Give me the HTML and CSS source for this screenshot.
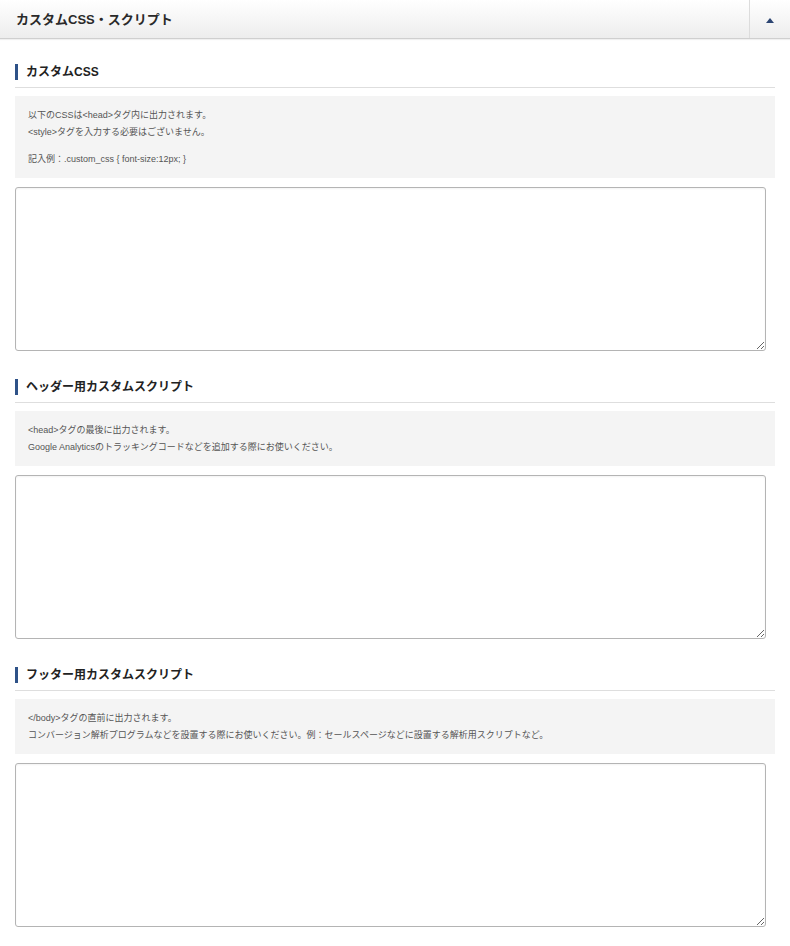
FILE: index.html
```html
<!DOCTYPE html>
<html lang="ja">
<head>
<meta charset="utf-8">
<title>カスタムCSS・スクリプト</title>
<link rel="stylesheet" href="styles.css">
</head>
<body>
<div class="panel">
  <div class="panel-head">
    <h2 class="panel-title">カスタムCSS・スクリプト</h2>
    <button class="panel-toggle" type="button" aria-label="閉じる">
      <svg width="8" height="5" viewBox="0 0 8 5"><path d="M0 5 L4 0 L8 5 Z" fill="#2c4572"/></svg>
    </button>
  </div>
  <div class="panel-body">
    <section class="field">
      <h3 class="field-title">カスタムCSS</h3>
      <div class="field-note">
        <p>以下のCSSは&lt;head&gt;タグ内に出力されます。<br>&lt;style&gt;タグを入力する必要はございません。</p>
        <p>記入例：.custom_css { font-size:12px; }</p>
      </div>
      <textarea class="field-input"></textarea>
    </section>
    <section class="field">
      <h3 class="field-title">ヘッダー用カスタムスクリプト</h3>
      <div class="field-note">
        <p>&lt;head&gt;タグの最後に出力されます。<br>Google Analyticsのトラッキングコードなどを追加する際にお使いください。</p>
      </div>
      <textarea class="field-input"></textarea>
    </section>
    <section class="field">
      <h3 class="field-title">フッター用カスタムスクリプト</h3>
      <div class="field-note">
        <p>&lt;/body&gt;タグの直前に出力されます。<br>コンバージョン解析プログラムなどを設置する際にお使いください。例：セールスページなどに設置する解析用スクリプトなど。</p>
      </div>
      <textarea class="field-input"></textarea>
    </section>
  </div>
</div>
</body>
</html>
```
FILE: styles.css
```css
* {
  box-sizing: border-box;
}

html, body {
  margin: 0;
  padding: 0;
  background: #fff;
}

body {
  font-family: "Liberation Sans", "Noto Sans CJK JP", sans-serif;
  color: #333;
}

/* collapsible panel header */
.panel-head {
  display: flex;
  align-items: stretch;
  height: 39px;
  background: linear-gradient(#ffffff, #ededed);
  border-bottom: 1px solid #cfcfcf;
  box-shadow: 0 1px 1px rgba(0, 0, 0, 0.06);
}

.panel-title {
  flex: 1;
  margin: 0;
  padding: 1px 0 0 16px;
  font-size: 13px;
  font-weight: bold;
  line-height: 37px;
  color: #2a2a2a;
}

.panel-toggle {
  width: 41px;
  border: 0;
  border-left: 1px solid #dcdcdc;
  background: transparent;
  display: flex;
  align-items: center;
  justify-content: center;
  padding: 3px 0 0 0;
}

.panel-body {
  padding: 0 15px;
}

/* one settings field: heading, note, textarea */
.field {
  margin-top: 26px;
}

.field:first-child {
  margin-top: 23px;
}

.field-title {
  position: relative;
  margin: 0;
  padding: 1px 0 6px 11px;
  font-size: 12px;
  font-weight: bold;
  line-height: 18px;
  color: #222;
  border-bottom: 1px solid #dedede;
}

.field-title::before {
  content: "";
  position: absolute;
  left: 0;
  top: 2px;
  width: 3px;
  height: 16px;
  background: #2e5288;
}

.field-note {
  margin-top: 8px;
  padding: 11px 13px 10px;
  background: #f4f4f4;
  font-size: 9px;
  line-height: 17px;
  color: #555;
}

.field-note p {
  margin: 0;
}

.field-note p + p {
  margin-top: 10px;
}

.field-input {
  display: block;
  width: 751px;
  height: 164px;
  margin-top: 9px;
  border: 1px solid #b4b4b4;
  border-radius: 3px;
  box-shadow: inset 0 1px 2px rgba(0, 0, 0, 0.05);
  background: #fff;
  font-family: "Liberation Mono", monospace;
  font-size: 12px;
}
```
